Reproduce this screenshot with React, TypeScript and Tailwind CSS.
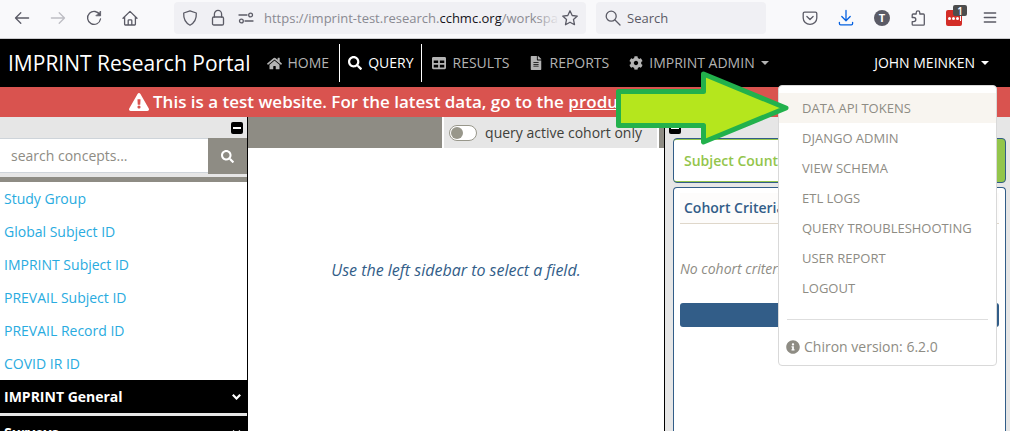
import type { ReactNode } from "react";
import {
  FaCog,
  FaExclamationTriangle,
  FaFileAlt,
  FaHome,
  FaInfoCircle,
  FaSearch,
  FaTable,
} from "react-icons/fa";

const fields = [
  "Study Group",
  "Global Subject ID",
  "IMPRINT Subject ID",
  "PREVAIL Subject ID",
  "PREVAIL Record ID",
  "COVID IR ID",
];

const groups = ["IMPRINT General", "Surveys"];

const menuItems = [
  "DATA API TOKENS",
  "DJANGO ADMIN",
  "VIEW SCHEMA",
  "ETL LOGS",
  "QUERY TROUBLESHOOTING",
  "USER REPORT",
  "LOGOUT",
];

function Glyph({ children, label, className = "" }: { children: ReactNode; label: string; className?: string }) {
  return (
    <button type="button" aria-label={label} className={"flex size-5 shrink-0 items-center justify-center " + className}>
      <svg
        viewBox="0 0 16 16"
        className="size-4 overflow-visible"
        fill="none"
        stroke="currentColor"
        strokeWidth="1.3"
        strokeLinecap="round"
        strokeLinejoin="round"
      >
        {children}
      </svg>
    </button>
  );
}

function BrowserBar() {
  return (
    <div className="flex h-[39px] shrink-0 items-center border-b border-[#cccccf] bg-[#f9f9fb] pt-px pr-[10px] pb-[3px] pl-3 text-[#5b5b66]">
      <div className="flex w-[162px] shrink-0 gap-4">
        <Glyph label="Back">
          <path d="M14.6 8H1.5M6.8 2.8 1.5 8l5.3 5.2" />
        </Glyph>
        <Glyph label="Forward" className="text-[#bdbdc3]">
          <path d="M1.4 8h13.1M9.2 2.8 14.5 8l-5.3 5.2" />
        </Glyph>
        <Glyph label="Reload">
          <path d="M13.9 5A6.5 6.5 0 1 0 14.5 9" />
          <path d="M14.6 1.4v4.4h-4.4z" fill="currentColor" strokeWidth="0.8" />
        </Glyph>
        <Glyph label="Home">
          <path d="M1 8.2 8 1.4l7 6.8M2.6 7v7.3c0 .4.3.7.7.7h9.4c.4 0 .7-.3.7-.7V7M6.200 15v-4.400c0-.5.3-.8.8-.8h2c.5 0 .8.3.8.8V15" />
        </Glyph>
      </div>
      <div className="flex h-8 w-[412px] shrink-0 items-center rounded bg-[#f0f0f4] pr-[6px] pl-[6px]">
        <div className="flex gap-2">
          <Glyph label="Tracking protection">
            <path d="M8 .8 14.3 3c.3 5.200-1.200 9.500-6.300 12.200C2.900 12.500 1.400 8.200 1.700 3z" />
          </Glyph>
          <Glyph label="Connection security">
            <rect x="2.500" y="7" width="11" height="8" rx="1.300" />
            <path d="M4.400 7V4a3.600 3.600 0 0 1 7.200 0v3" />
          </Glyph>
          <Glyph label="Permissions">
            <path d="M1 5h8M7 11h8" />
            <circle cx="12.600" cy="5" r="1.900" />
            <circle cx="3.400" cy="11" r="1.900" />
          </Glyph>
        </div>
        <div className="relative ml-[8px] flex-1 overflow-hidden text-[13px] leading-5 whitespace-nowrap text-[#8a8a92]">
          https://imprint-test.research.<span className="text-[#15141a]">cchmc.org</span>/workspa
          <span className="absolute inset-y-0 right-0 w-6 bg-linear-to-r from-transparent to-[#f0f0f4]" />
        </div>
        <Glyph label="Bookmark">
          <path d="m8 .8 2.200 4.700 5.100.6-3.800 3.500 1 5.100L8 12.200l-4.500 2.500 1-5.100L.7 6.100l5.100-.6z" />
        </Glyph>
      </div>
      <div className="ml-[10px] flex h-8 w-[170px] shrink-0 items-center gap-1 rounded bg-[#f0f0f4] pl-[7px]">
        <Glyph label="Search engine">
          <circle cx="6.200" cy="6.200" r="5" />
          <path d="m10 10 5 5" />
        </Glyph>
        <input
          aria-label="Search"
          placeholder="Search"
          className="w-28 bg-transparent text-[13px] leading-5 outline-none placeholder:text-[#5b5b66]"
        />
      </div>
      <div className="ml-auto flex gap-4">
        <Glyph label="Pocket">
          <path d="M2.600 2.200h10.800c.8 0 1.400.6 1.400 1.400V8a6.800 6.400 0 0 1-13.600 0V3.600c0-.8.6-1.400 1.400-1.400zM4.900 6.500 8 9.500l3.100-3" />
        </Glyph>
        <Glyph label="Downloads" className="text-[#0561e0]">
          <path d="M8 .5v10M3.800 6.500 8 10.700l4.200-4.200M1.400 12.300v1.300c0 .7.500 1.200 1.200 1.200h10.800c.7 0 1.200-.5 1.200-1.200v-1.300" />
        </Glyph>
        <button type="button" aria-label="Account" className="flex size-5 items-center justify-center">
          <span className="flex size-4 items-center justify-center rounded-full bg-[#5b5b66] text-[11px] leading-4 font-bold text-white">T</span>
        </button>
        <Glyph label="Extensions">
          <path d="M2.200 7.500V5c0-.6.4-1 1-1h3V2.700a1.800 1.800 0 0 1 3.600 0V4h3.600c.5 0 .9.400.9.900v9.400c0 .5-.4.900-.9.900H3.100c-.5 0-.9-.4-.9-.9v-2.600h1.500a2 2 0 0 0 0-4.200z" />
        </Glyph>
        <button type="button" aria-label="Password manager" className="relative flex size-5 items-center justify-center">
          <span className="flex size-4 items-center justify-center gap-px rounded-xs bg-[#d32d27]">
            <span className="size-[3px] rounded-full bg-white" />
            <span className="size-[3px] rounded-full bg-white" />
            <span className="size-[3px] rounded-full bg-white" />
            <span className="h-[5px] w-px bg-white" />
          </span>
          <span className="absolute -top-[3px] -right-[3px] flex h-[11px] w-[14px] items-center justify-center rounded-xs bg-[#4d4d4d] text-[10px] leading-none font-semibold text-white">
            1
          </span>
        </button>
        <Glyph label="Menu">
          <path d="M2.300 3h11.400M2.300 7.500h11.400M2.300 12h11.400" />
        </Glyph>
      </div>
    </div>
  );
}

function Caret() {
  return <span className="border-x-4 border-t-4 border-x-transparent border-t-current" />;
}

function UserMenu() {
  return (
    <div className="absolute top-[46px] right-[13px] z-10 w-[219px] rounded border border-[#d9d9d9] bg-white pt-[7px] pb-[7px]">
      <ul>
        {menuItems.map((item, index) => (
          <li key={item}>
            <a
              href="#"
              className={
                "block pl-[23px] text-[13px] leading-[30px] text-[#8e8c84] hover:bg-[#f8f5f0] " +
                (index === 0 ? "bg-[#f8f5f0]" : "")
              }
            >
              {item}
            </a>
          </li>
        ))}
      </ul>
      <hr className="mx-2 mt-4 mb-4 border-[#dedede]" />
      <p className="flex items-center gap-1 pl-[7px] text-sm leading-[22px] text-[#8e8c84]">
        <FaInfoCircle />
        Chiron version: 6.2.0
      </p>
      <svg viewBox="0 0 176 78" className="pointer-events-none absolute -top-[17px] -left-[165px] h-[78px] w-[176px]">
        <path
          d="M4.500 22.500H89.500V5L172 39 89.500 73V56.500H4.500Z"
          fill="#b5e61d"
          stroke="#22b14c"
          strokeWidth="5"
          strokeLinejoin="round"
        />
      </svg>
    </div>
  );
}

function NavBar() {
  const link = "flex items-center gap-[6px] px-[10px] h-[38px]";
  return (
    <nav className="relative flex h-12 shrink-0 items-center bg-black pr-[21px] pl-2 text-sm whitespace-nowrap text-[#b3b3b3]">
      <a href="#" className="mr-[6px] text-[21px] leading-8 text-white">
        IMPRINT Research Portal
      </a>
      <a href="#" className={link}>
        <FaHome className="size-[15px]" />
        HOME
      </a>
      <a href="#" aria-current="page" className="flex h-[38px] items-center gap-[6px] border-x border-white px-2 text-white">
        <FaSearch />
        QUERY
      </a>
      <a href="#" className={link}>
        <FaTable />
        RESULTS
      </a>
      <a href="#" className={link}>
        <FaFileAlt />
        REPORTS
      </a>
      <button type="button" className={link}>
        <FaCog />
        IMPRINT ADMIN
        <Caret />
      </button>
      <button type="button" aria-expanded="true" className="ml-auto flex items-center gap-[6px] text-white">
        JOHN MEINKEN
        <Caret />
      </button>
      <UserMenu />
    </nav>
  );
}

function Collapse({ label }: { label: string }) {
  return (
    <button type="button" aria-label={label} className="flex size-3 items-center justify-center rounded-xs bg-black">
      <span className="h-[2px] w-2 bg-white" />
    </button>
  );
}

function Sidebar() {
  return (
    <aside className="flex w-[248px] shrink-0 flex-col overflow-hidden border-r border-black bg-white">
      <div className="flex h-[21px] shrink-0 items-center justify-end bg-[#e6e6e6] pr-1">
        <Collapse label="Collapse fields" />
      </div>
      <form className="flex h-9 shrink-0 bg-[#e6e6e6]">
        <input
          aria-label="Search concepts"
          placeholder="search concepts..."
          className="h-[35px] min-w-0 flex-1 border-y border-[#ced4da] bg-white px-[11px] text-sm outline-none placeholder:text-[#8e8c84]"
        />
        <button type="button" aria-label="Search" className="flex w-[39px] items-center justify-center bg-[#8e8c84] text-white">
          <FaSearch className="size-[13px]" />
        </button>
      </form>
      <div className="h-2 shrink-0 border-t-3 border-b-5 border-t-[#e6e6e6] border-b-[#8e8c84]" />
      <ul className="shrink-0">
        {fields.map((field) => (
          <li key={field}>
            <a href="#" className="block pl-1 text-sm leading-[33px] text-[#29abe0]">
              {field}
            </a>
          </li>
        ))}
      </ul>
      {groups.map((group) => (
        <button
          key={group}
          type="button"
          className="flex h-9 shrink-0 items-center justify-between border-b-3 border-[#e6e6e6] bg-black pr-[6px] pl-1 text-sm font-bold text-white"
        >
          {group}
          <svg viewBox="0 0 9 6" className="h-[6px] w-[9px]" fill="none" stroke="currentColor" strokeWidth="2.2">
            <path d="M.8.8 4.500 4.500 8.200.8" />
          </svg>
        </button>
      ))}
    </aside>
  );
}

function Workspace() {
  return (
    <main className="flex min-w-0 flex-1 flex-col bg-white">
      <div className="flex h-[31px] justify-end bg-[#8e8c84] pr-[5px]">
        <label className="flex items-center gap-2 border-x-2 border-white bg-[#e6e6e6] pr-[15px] pl-[5px] text-sm whitespace-nowrap text-[#3e3f3a]">
          <input
            type="checkbox"
            className="h-4 w-7 appearance-none rounded-full border border-[#98978b] bg-white before:mt-px before:ml-px before:block before:size-3 before:rounded-full before:bg-[#98978b]"
          />
          query active cohort only
        </label>
      </div>
      <p className="pt-[110px] text-center text-base leading-6 text-[#325d88] italic">
        Use the left sidebar to select a field.
      </p>
    </main>
  );
}

function CohortPanel() {
  return (
    <aside className="flex w-[346px] shrink-0 flex-col overflow-hidden border-l border-black bg-[#e6e6e6] pr-1 pl-2">
      <div className="-ml-1 flex h-[21px] shrink-0 items-center">
        <Collapse label="Collapse cohort" />
      </div>
      <section className="shrink-0 rounded border border-[#325d88] bg-[#93c54b] py-px">
        <h2 className="mr-12 rounded-l-xs bg-white pl-[10px] text-sm leading-[41px] font-semibold text-[#93c54b]">
          Subject Counts
        </h2>
      </section>
      <section className="mt-1 flex-1 rounded-t border border-b-0 border-[#325d88] bg-white px-[6px] pt-[5px]">
        <h2 className="border-b border-[#dfd7ca] bg-[#fdfcfb] pl-1 text-sm leading-[30px] font-semibold text-[#325d88]">
          Cohort Criteria
        </h2>
        <p className="pt-[34px] text-sm leading-[22px] text-[#8e8c84] italic">No cohort criteria</p>
        <button type="button" aria-label="Save cohort" className="mt-[23px] block h-6 w-full rounded-[3px] bg-[#325d88]" />
      </section>
    </aside>
  );
}

export default function App() {
  return (
    <div className="flex h-screen flex-col overflow-hidden bg-white font-['Open_Sans',sans-serif]">
      <BrowserBar />
      <NavBar />
      <div className="flex h-[30px] shrink-0 items-center gap-1 bg-[#d9534f] pl-[129px] text-[17px] font-semibold whitespace-nowrap text-white">
        <FaExclamationTriangle className="size-5" />
        <p>
          This is a test website. For the latest data, go to the{" "}
          <a href="#" className="underline">
            production site
          </a>
        </p>
      </div>
      <div className="flex min-h-0 flex-1">
        <Sidebar />
        <Workspace />
        <CohortPanel />
      </div>
    </div>
  );
}
